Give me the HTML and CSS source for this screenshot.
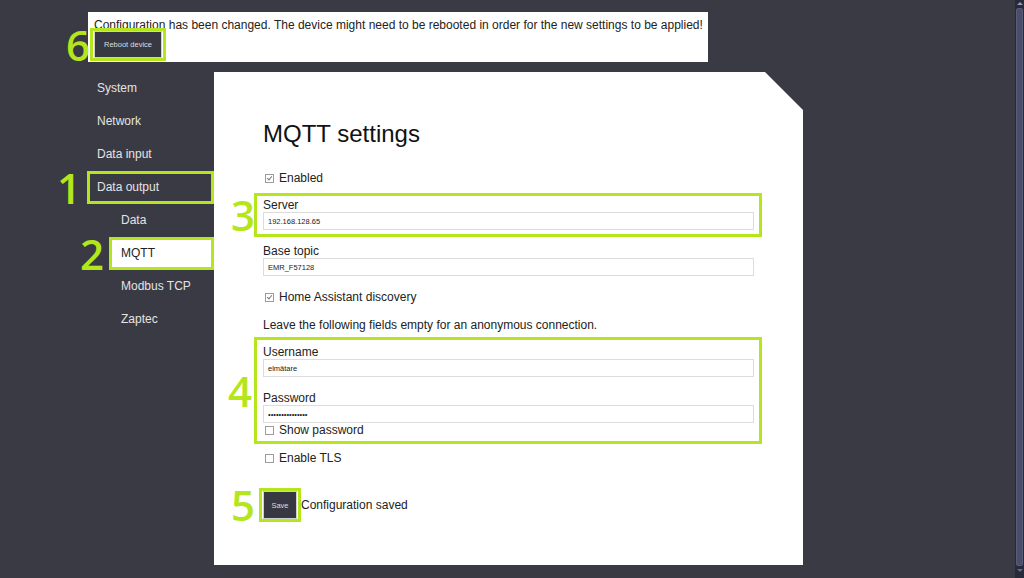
FILE: index.html
```html
<!DOCTYPE html>
<html lang="en">
<head>
  <meta charset="UTF-8" />
  <title>MQTT settings</title>
  <link rel="stylesheet" href="styles.css">
</head>
<body>
<div class="screen">
  <div class="page">
    <div class="banner">
      <div class="banner-text">Configuration has been changed. The device might need to be rebooted in order for the new settings to be applied!</div>
      <div class="hl hl-reboot">
        <span class="num">6</span>
        <button class="dark-btn reboot-btn">Reboot device</button>
      </div>
    </div>

    <div class="main">
      <nav class="sidebar">
        <div class="nav-item">System</div>
        <div class="nav-item">Network</div>
        <div class="nav-item">Data input</div>
        <div class="nav-item marked"><span class="num">1</span>Data output</div>
        <div class="nav-item sub">Data</div>
        <div class="nav-item sub marked active"><span class="num">2</span>MQTT</div>
        <div class="nav-item sub">Modbus TCP</div>
        <div class="nav-item sub">Zaptec</div>
      </nav>

      <div class="card">
        <h1>MQTT settings</h1>

        <div class="check-row first">
          <span class="box checked"></span>Enabled
        </div>

        <div class="hl hl-field">
          <span class="num">3</span>
          <div class="field-label">Server</div>
          <input class="text-input" type="text" value="192.168.128.65" />
        </div>

        <div class="field-label topic-label">Base topic</div>
        <input class="text-input" type="text" value="EMR_F57128" />

        <div class="check-row spaced">
          <span class="box checked"></span>Home Assistant discovery
        </div>

        <div class="note">Leave the following fields empty for an anonymous connection.</div>

        <div class="hl hl-auth">
          <span class="num">4</span>
          <div class="field-label">Username</div>
          <input class="text-input" type="text" value="elmätare" />
          <div class="field-label pass-label">Password</div>
          <input class="text-input" type="password" value="secretpassword1" />
          <div class="check-row">
            <span class="box"></span>Show password
          </div>
        </div>

        <div class="check-row tls">
          <span class="box"></span>Enable TLS
        </div>

        <div class="save-row">
          <div class="hl hl-save">
            <span class="num">5</span>
            <button class="dark-btn save-btn">Save</button>
          </div>
          <span class="saved-msg">Configuration saved</span>
        </div>
      </div>
    </div>
  </div>

  <div class="scrollbar">
    <div class="arrow up"></div>
    <div class="thumb"></div>
    <div class="arrow down"></div>
  </div>
</div>
</body>
</html>
```

FILE: styles.css
```css
body {
  margin: 0;
  font-family: "Liberation Sans", Arial, sans-serif;
  font-size: 12px;
  background: #393a44;
  color: #222;
  overflow: hidden;
}
.screen {
  display: flex;
  height: 578px;
}
.page {
  flex: 1;
}

/* annotation marks */
.hl {
  position: relative;
  border: 3px solid #b5e61d;
}
.num {
  position: absolute;
  right: 100%;
  top: 50%;
  transform: translateY(-50%);
  margin-right: 1px;
  font-family: "Open Sans", sans-serif;
  font-size: 42px;
  font-weight: 600;
  line-height: 42px;
  color: #b5e61d;
}

/* top notice */
.banner {
  margin: 12px 0 0 88px;
  width: 620px;
  height: 50px;
  background: #fff;
  padding: 7px 0 0 6px;
  box-sizing: border-box;
}
.banner-text {
  line-height: 12px;
}
.hl-reboot {
  display: inline-block;
  margin: -3px 0 0 -4px;
  padding: 0 1px;
}
.hl-reboot .num {
  margin-right: 3px;
}
.dark-btn {
  display: block;
  background: #383842;
  color: #ddd;
  border: 1px solid #cfcfcf;
  font-family: "Liberation Sans", Arial, sans-serif;
  font-size: 7.5px;
  padding: 0;
}
.reboot-btn {
  width: 68px;
  height: 27px;
}

/* layout */
.main {
  display: flex;
  margin-top: 10px;
}
.sidebar {
  width: 127px;
  margin-left: 87px;
}
.nav-item {
  position: relative;
  height: 33px;
  line-height: 33px;
  padding-left: 10px;
  color: #e4e4e4;
}
.nav-item.sub {
  margin-left: 22px;
  padding-left: 12px;
}
.nav-item.marked {
  outline: 3px solid #b5e61d;
  outline-offset: -3px;
}
.nav-item.marked .num {
  margin-right: 6px;
}
.nav-item.sub.marked .num {
  margin-right: 5px;
}
.nav-item.active {
  background: #fff;
  color: #222;
}

/* settings card */
.card {
  width: 589px;
  height: 493px;
  background: #fff;
  padding: 48px 49px 0;
  box-sizing: border-box;
  clip-path: polygon(0 0, calc(100% - 38px) 0, 100% 38px, 100% 100%, 0 100%);
}
h1 {
  margin: 0;
  font-size: 24px;
  line-height: 28px;
  font-weight: normal;
  color: #111;
}
.field-label {
  line-height: 14px;
}
.text-input {
  display: block;
  width: 100%;
  height: 18px;
  margin: 0;
  padding: 0 4px;
  box-sizing: border-box;
  border: 1px solid #dcdcdc;
  font-family: "Liberation Sans", Arial, sans-serif;
  font-size: 7.5px;
  color: #222;
  outline: none;
}
.check-row {
  display: flex;
  align-items: center;
  height: 14px;
  line-height: 14px;
}
.check-row.first {
  margin-top: 23px;
}
.check-row.spaced {
  margin-top: 14px;
}
.check-row.tls {
  margin-top: 7px;
}
.box {
  width: 7px;
  height: 7px;
  margin: 1px 5px 0 2px;
  border: 1px solid #9c9c9c;
  background: #fff;
  position: relative;
}
.box.checked::after {
  content: "";
  position: absolute;
  left: 2px;
  top: 0;
  width: 2px;
  height: 4px;
  border: solid #7a7a7a;
  border-width: 0 1px 1px 0;
  transform: rotate(40deg);
}
.hl-field {
  margin: 8px -8px 0 -9px;
  padding: 2px 5px 4px 6px;
}
.hl-field .num {
  margin-right: 2px;
}
.topic-label {
  margin-top: 7px;
}
.note {
  margin-top: 14px;
  line-height: 14px;
}
.hl-auth {
  margin: 5px -8px 0 -9px;
  padding: 5px 5px 4px 6px;
}
.hl-auth .num {
  margin-right: 5px;
}
.pass-label {
  margin-top: 14px;
}
.save-row {
  display: flex;
  align-items: center;
  margin-top: 23px;
}
.hl-save {
  margin-left: -4px;
  padding: 0 1px;
}
.hl-save .num {
  margin-right: 7px;
}
.save-btn {
  width: 34px;
  height: 28px;
}

/* window scrollbar */
.scrollbar {
  width: 9px;
  background: #272a3a;
  display: flex;
  flex-direction: column;
  align-items: center;
}
.thumb {
  flex: 1;
  width: 5px;
  margin: 1px 0;
  background: #4b4e6a;
  border: 1px solid #5a5d7a;
  border-radius: 2px;
}
.arrow {
  width: 0;
  height: 0;
  margin: 2px 0;
  border-left: 3px solid transparent;
  border-right: 3px solid transparent;
}
.arrow.up {
  border-bottom: 3px solid #9a9cb0;
}
.arrow.down {
  border-top: 3px solid #6a6c80;
  margin-bottom: 6px;
}
```
